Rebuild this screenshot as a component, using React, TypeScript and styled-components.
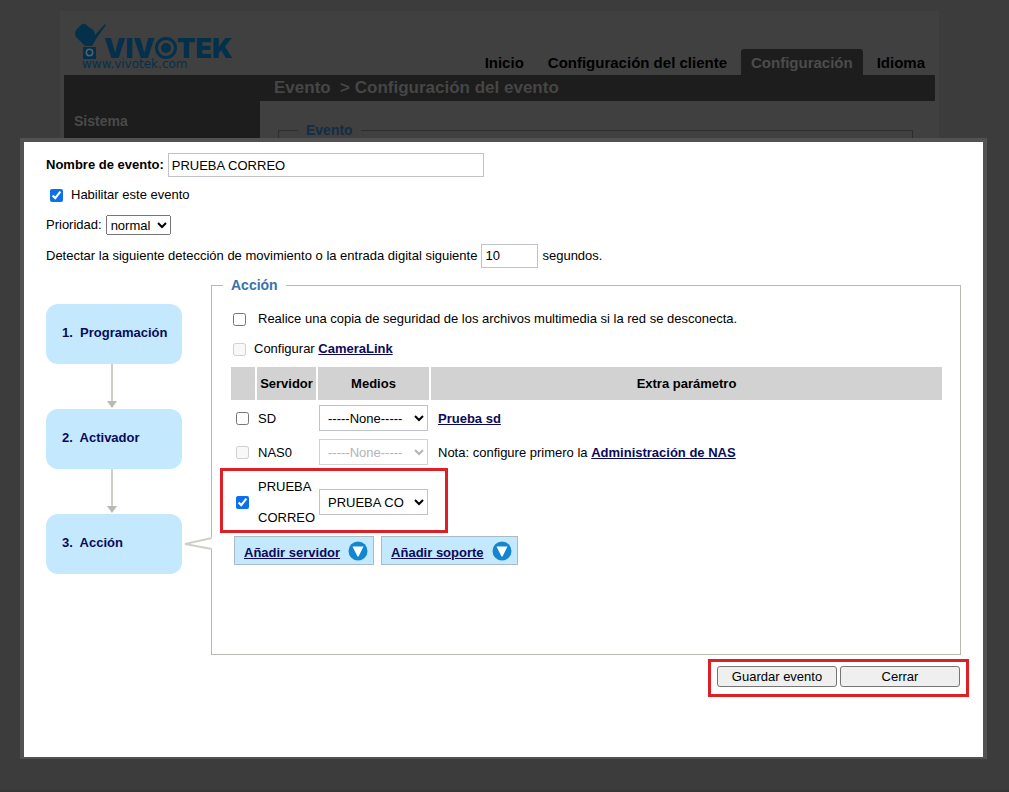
import React from "react";
import styled, { createGlobalStyle } from "styled-components";

const GlobalStyle = createGlobalStyle`
  * { box-sizing: border-box; }
  body {
    margin: 0;
    background: #3c3c3c;
    color: #000;
    font: 13px/31px "Liberation Sans", Arial, sans-serif;
  }
`;

const Page = styled.div`
  position: relative;
  min-height: 100vh;
  padding: 11px 70px 0 60px;
  border-bottom: 2px solid #363636;
`;

/* Dimmed site behind the dialog */
const Site = styled.div`
  background: #404040;
  padding: 0 4px 24px;
`;

const SiteHeader = styled.header`
  display: flex;
  justify-content: space-between;
  align-items: flex-end;
  height: 64px;
`;

const Logo = styled.svg`
  display: block;
  align-self: flex-start;
  margin: 10px 0 0 10px;
  font-family: Inter, sans-serif;
`;

const Nav = styled.nav`
  display: flex;
`;

const NavLink = styled.a<{ $active?: boolean }>`
  padding: 2px 10px 0;
  margin-left: 4px;
  border-radius: 3px 3px 0 0;
  font-size: 15px;
  font-weight: bold;
  line-height: 24px;
  text-decoration: none;
  color: ${(p) => (p.$active ? "#4c4c4c" : "#000")};
  background: ${(p) => (p.$active ? "#1d1d1d" : "transparent")};
`;

const SiteBody = styled.div`
  display: grid;
  grid-template-columns: 196px 1fr;
`;

const Sidebar = styled.aside`
  background: #1d1d1d;
  color: #4a4a4a;
  padding: 31px 10px;
  font-size: 14px;
  font-weight: bold;
`;

const Breadcrumb = styled.h1`
  margin: 0;
  padding-left: 14px;
  background: #1d1d1d;
  color: #464646;
  font-size: 17px;
  line-height: 26px;
  white-space: pre;
`;

const SiteGroup = styled.fieldset`
  margin: 20px 22px 0 18px;
  min-height: 120px;
  padding: 0 19px;
  border: 1px solid #2d2d2d;
`;

const SiteLegend = styled.legend`
  padding: 0 8px;
  color: #152c46;
  font-size: 14px;
  font-weight: bold;
  line-height: 18px;
`;

/* Dialog */
const Dialog = styled.section`
  position: absolute;
  top: 138px;
  left: 20px;
  right: 22px;
  padding: 8px 22px 60px;
  border: solid #525252;
  border-width: 4px 4px 2px;
  background: #fff;
`;

const Row = styled.div`
  display: flex;
  align-items: center;
  gap: 4px;
  min-height: 30px;
`;

const Label = styled.label<{ $bold?: boolean }>`
  font-weight: ${(p) => (p.$bold ? "bold" : "normal")};
  line-height: 30px;
`;

const TextInput = styled.input<{ $width: number }>`
  width: ${(p) => p.$width}px;
  height: 24px;
  padding: 0 3px;
  border: 1px solid #c0c3cc;
  font: 13px "Liberation Sans", Arial, sans-serif;
`;

const Checkbox = styled.input.attrs({ type: "checkbox" })<{ $gap?: number; $inset?: number }>`
  flex: none;
  width: 13px;
  height: 13px;
  margin: 0 ${(p) => p.$gap ?? 0}px 0 ${(p) => p.$inset ?? 0}px;
  vertical-align: middle;
  accent-color: #0b70ea;
`;

const PlainSelect = styled.select`
  width: 65px;
  height: 20px;
  font: 13px "Liberation Sans", Arial, sans-serif;
`;

const MediaSelect = styled.select`
  display: block;
  width: 109px;
  height: 26px;
  margin-left: 1px;
  padding: 0 4px;
  border: 1px solid #c0c3cc;
  border-radius: 0;
  background: #fff;
  color: #000;
  font: 13px "Liberation Sans", Arial, sans-serif;
  &:disabled { color: #b4b4b4; border-color: #d0d2d8; opacity: 1; }
`;

const Workflow = styled.div`
  display: grid;
  grid-template-columns: 136px 1fr;
  column-gap: 29px;
  margin-top: 6px;
`;

const Steps = styled.ol`
  list-style: none;
  margin: 0;
  padding: 27px 0 0;
`;

const Step = styled.li`
  display: flex;
  flex-direction: column;
`;

const StepButton = styled.button`
  height: 60px;
  padding: 0 0 4px 16px;
  border: 0;
  border-radius: 12px;
  background: #c4e9ff;
  color: #0a0a5c;
  font: bold 13px "Liberation Sans", Arial, sans-serif;
  text-align: left;
  white-space: pre;
`;

const Arrow = styled.svg`
  display: block;
  margin-left: 60px;
`;

const Panel = styled.fieldset`
  position: relative;
  min-width: 0;
  min-height: 378px;
  margin: 0;
  padding: 10px 18px 0 19px;
  border: 1px solid #b9b9b3;
`;

const PanelLegend = styled.legend`
  margin-left: -8px;
  padding: 0 8px;
  color: #3673ac;
  font-size: 14px;
  font-weight: bold;
  line-height: 17px;
`;

const Pointer = styled.svg`
  position: absolute;
  left: -28px;
  top: 242px;
`;

const TextLink = styled.a`
  color: #0a0a5c;
  font-weight: bold;
`;

const Table = styled.table`
  width: calc(100% + 4px);
  margin: 1px 0 0 -2px;
  border-collapse: separate;
  border-spacing: 2px;
  table-layout: fixed;
  th { height: 33px; padding: 0; background: #d2d2d2; }
  td { height: 32px; padding: 0; }
`;

const Col = styled.col<{ $width?: number }>`
  width: ${(p) => (p.$width ? `${p.$width}px` : "auto")};
`;

const CheckCell = styled.td`
  position: relative;
  line-height: 13px;
`;

const ServerCell = styled.td<{ $tall?: boolean }>`
  && { padding: ${(p) => (p.$tall ? "1px 0 1px 1px" : "0 0 0 1px")}; }
`;

const ExtraCell = styled.td`
  && { padding-left: 7px; }
`;

const RowMark = styled.span`
  position: absolute;
  left: -11px;
  top: -2px;
  width: 228px;
  height: 65px;
  border: 3px solid #de1f26;
  pointer-events: none;
`;

const AddBar = styled.div`
  display: flex;
  gap: 7px;
  padding-left: 3px;
`;

const AddButton = styled.button`
  display: flex;
  align-items: center;
  gap: 8px;
  height: 29px;
  padding: 0 5px 0 9px;
  border: 1px solid #a9bcc4;
  background: #c4e9ff;
  color: #0a0a5c;
  font: bold 13px "Liberation Sans", Arial, sans-serif;
`;

const AddLabel = styled.span`
  padding-top: 4px;
  text-decoration: underline;
`;

const Footer = styled.div`
  display: flex;
  justify-content: flex-end;
  margin: 4px -8px 0 0;
`;

const FooterMark = styled.div`
  display: flex;
  gap: 3px;
  height: 38px;
  padding: 4px 6px;
  border: 3px solid #de1f26;
`;

const ActionButton = styled.button`
  width: 120px;
  height: 21px;
  padding: 0;
  border: 1px solid #767676;
  border-radius: 3px;
  background: #efefef;
  color: #000;
  font: 13px "Liberation Sans", Arial, sans-serif;
`;

const DownArrow = () => (
  <Arrow width="12" height="45" viewBox="0 0 12 45" aria-hidden="true">
    <path d="M6 0V37" stroke="#cfcfc9" strokeWidth="2" />
    <path d="M1 37H11L6 44Z" fill="#bab9b2" />
  </Arrow>
);

const DropIcon = () => (
  <svg width="20" height="20" viewBox="0 0 20 20" aria-hidden="true">
    <circle cx="10" cy="10" r="9.5" fill="#1287cf" />
    <path d="M4.500 5.500H15.500L10.500 15.500H9.500Z" fill="#fff" />
  </svg>
);

const steps = ["1.  Programación", "2.  Activador", "3.  Acción"];

export default function App() {
  return (
    <>
      <GlobalStyle />
      <Page>
        <Site>
          <SiteHeader>
            <Logo width="164" height="50" viewBox="0 0 164 50" fill="#04304c" role="img" aria-label="VIVOTEK">
              <path d="M1 13Q1 11 2 9L7 4Q9 2 11 3L19 9Q21 11 21 14L31 3L32 4L22 18L18 25H11L3 17Q1 15 1 13Z" />
              <path d="M9 26H22V38H9Z" />
              <circle cx="15.500" cy="31.500" r="3.200" fill="none" stroke="#52636c" strokeWidth="1.500" />
              <text x="30" y="37" fontSize="27" fontWeight="900">VIV</text>
              <circle cx="92" cy="27" r="12" fill="#404040" />
              <circle cx="92" cy="27" r="9.500" fill="none" stroke="#04304c" strokeWidth="3" />
              <circle cx="92" cy="27" r="5" />
              <text x="103" y="37" fontSize="27" fontWeight="900">TEK</text>
              <text x="8" y="47" fontSize="12" fontFamily="DejaVu Sans">www.vivotek.com</text>
            </Logo>
            <Nav>
              <NavLink href="#inicio">Inicio</NavLink>
              <NavLink href="#cliente">Configuración del cliente</NavLink>
              <NavLink href="#configuracion" $active>Configuración</NavLink>
              <NavLink href="#idioma">Idioma</NavLink>
            </Nav>
          </SiteHeader>
          <SiteBody>
            <Sidebar>Sistema</Sidebar>
            <div>
              <Breadcrumb>Evento  &gt; Configuración del evento</Breadcrumb>
              <SiteGroup>
                <SiteLegend>Evento</SiteLegend>
              </SiteGroup>
            </div>
          </SiteBody>
        </Site>

        <Dialog role="dialog" aria-label="Evento">
          <Row>
            <Label $bold htmlFor="name">Nombre de evento:</Label>
            <TextInput id="name" $width={316} defaultValue="PRUEBA CORREO" />
          </Row>
          <Row>
            <Checkbox id="enable" $inset={4} $gap={4} defaultChecked />
            <Label htmlFor="enable">Habilitar este evento</Label>
          </Row>
          <Row>
            <Label htmlFor="priority">Prioridad:</Label>
            <PlainSelect id="priority">
              <option>normal</option>
            </PlainSelect>
          </Row>
          <Row>
            <Label htmlFor="delay">
              Detectar la siguiente detección de movimiento o la entrada digital siguiente
            </Label>
            <TextInput id="delay" $width={57} defaultValue="10" />
            <span>segundos.</span>
          </Row>

          <Workflow>
            <Steps>
              {steps.map((s, i) => (
                <Step key={s}>
                  <StepButton>{s}</StepButton>
                  {i < 2 && <DownArrow />}
                </Step>
              ))}
            </Steps>
            <Panel>
              <PanelLegend>Acción</PanelLegend>
              <Pointer width="28" height="16" viewBox="0 0 28 16" aria-hidden="true">
                <path d="M28 1L1 8L28 14Z" fill="#fff" />
                <path d="M28 2L1 8L28 13" fill="none" stroke="#cfcfc9" strokeWidth="2" />
              </Pointer>
              <Row>
                <Checkbox id="backup" $inset={2} $gap={8} />
                <Label htmlFor="backup">
                  Realice una copia de seguridad de los archivos multimedia si la red se desconecta.
                </Label>
              </Row>
              <Row>
                <Checkbox id="cameralink" $inset={2} $gap={4} disabled />
                <Label htmlFor="cameralink">
                  Configurar <TextLink href="#cameralink">CameraLink</TextLink>
                </Label>
              </Row>
              <Table>
                <colgroup>
                  <Col $width={24} />
                  <Col $width={59} />
                  <Col $width={111} />
                  <Col />
                </colgroup>
                <thead>
                  <tr>
                    <th aria-label="Activo" />
                    <th>Servidor</th>
                    <th>Medios</th>
                    <th>Extra parámetro</th>
                  </tr>
                </thead>
                <tbody>
                  <tr>
                    <CheckCell><Checkbox $inset={5} aria-label="SD" /></CheckCell>
                    <ServerCell>SD</ServerCell>
                    <td><MediaSelect aria-label="Medios SD"><option>-----None-----</option></MediaSelect></td>
                    <ExtraCell><TextLink href="#sd">Prueba sd</TextLink></ExtraCell>
                  </tr>
                  <tr>
                    <CheckCell><Checkbox $inset={5} aria-label="NAS0" disabled /></CheckCell>
                    <ServerCell>NAS0</ServerCell>
                    <td><MediaSelect aria-label="Medios NAS0" disabled><option>-----None-----</option></MediaSelect></td>
                    <ExtraCell>Nota: configure primero la <TextLink href="#nas">Administración de NAS</TextLink></ExtraCell>
                  </tr>
                  <tr>
                    <CheckCell><Checkbox $inset={5} aria-label="PRUEBA CORREO" defaultChecked /><RowMark /></CheckCell>
                    <ServerCell $tall>PRUEBA CORREO</ServerCell>
                    <td><MediaSelect aria-label="Medios PRUEBA CORREO"><option>PRUEBA CO</option></MediaSelect></td>
                    <ExtraCell />
                  </tr>
                </tbody>
              </Table>
              <AddBar>
                <AddButton><AddLabel>Añadir servidor</AddLabel> <DropIcon /></AddButton>
                <AddButton><AddLabel>Añadir soporte</AddLabel> <DropIcon /></AddButton>
              </AddBar>
            </Panel>
          </Workflow>

          <Footer>
            <FooterMark>
              <ActionButton>Guardar evento</ActionButton>
              <ActionButton>Cerrar</ActionButton>
            </FooterMark>
          </Footer>
        </Dialog>
      </Page>
    </>
  );
}
